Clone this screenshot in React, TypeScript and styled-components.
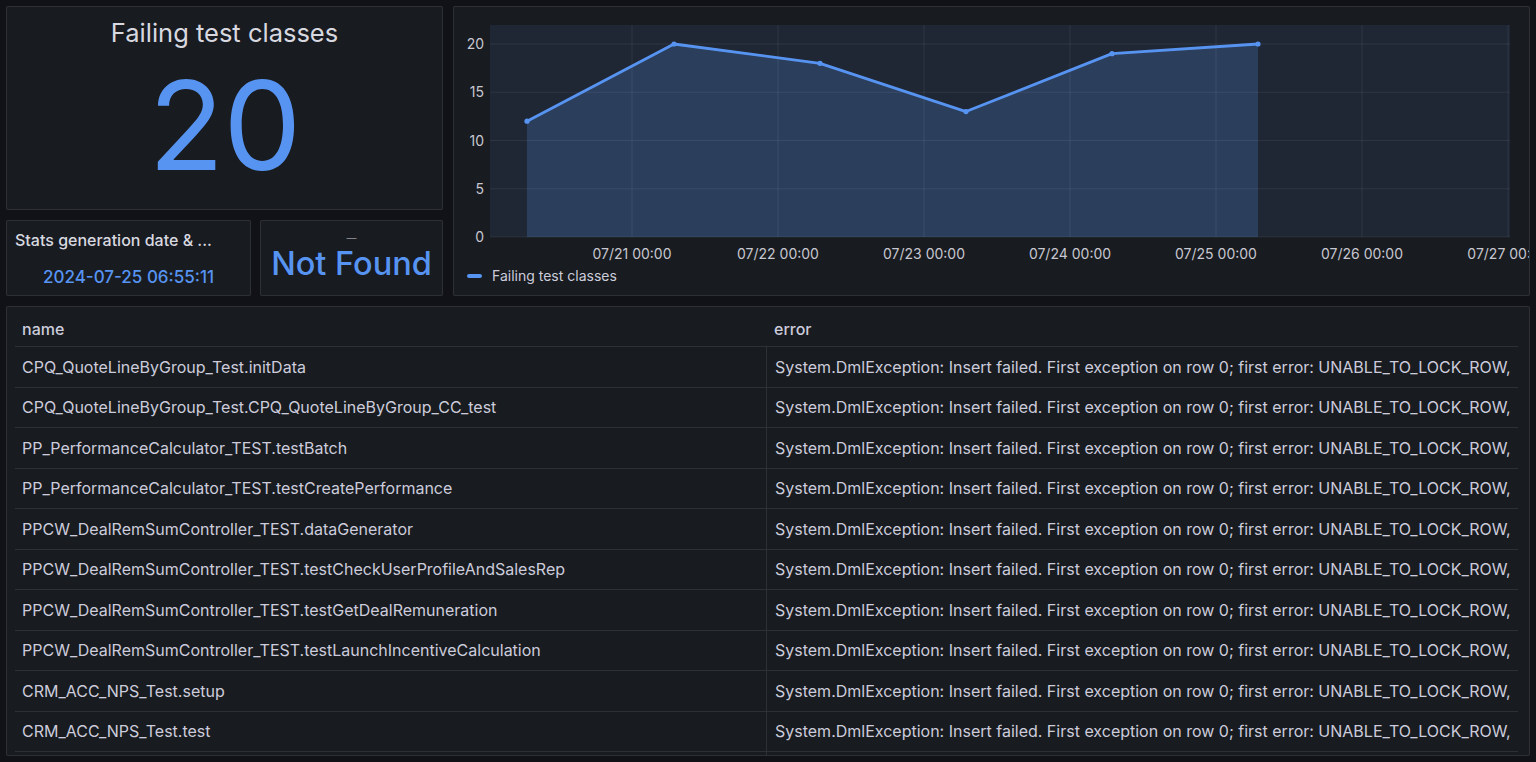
import React from 'react';
import styled, { createGlobalStyle } from 'styled-components';

const GlobalStyle = createGlobalStyle`
    html, body {
        margin: 0;
        padding: 0;
        background: #111217;
        overflow: hidden;
    }
    body {
        font-family: Inter, "Noto Sans", "Liberation Sans", sans-serif;
        color: #ccccdc;
    }
`

const Page = styled.div`
    display: flex;
    flex-direction: column;
    gap: 10px;
    padding: 6px;
    height: 762px;
    box-sizing: border-box;
`
const TopRow = styled.div`
    display: flex;
    gap: 10px;
    height: 290px;
`
const LeftCol = styled.div`
    display: flex;
    flex-direction: column;
    gap: 10px;
    width: 437px;
`
const StatRow = styled.div`
    display: flex;
    gap: 9px;
    height: 76px;
`
const Panel = styled.div<{ $grow?: boolean; $width?: number }>`
    background: #181b1f;
    border: 1px solid rgba(204, 204, 220, 0.12);
    border-radius: 2px;
    box-sizing: border-box;
    overflow: hidden;
    ${(p) => (p.$grow ? 'flex: 1;' : '')}
    ${(p) => (p.$width ? `width: ${p.$width}px;` : '')}
`
const BigStat = styled(Panel)`
    height: 204px;
    display: flex;
    flex-direction: column;
    align-items: center;
`
const BigTitle = styled.div`
    font-size: 25.5px;
    color: #d8d9e0;
    margin-top: 13px;
    line-height: 26px;
`
const BigValue = styled.div`
    font-size: 124px;
    color: #5794f2;
    line-height: 100px;
    margin-top: 29px;
    letter-spacing: -1px;
`
const DatePanel = styled(Panel)`
    display: flex;
    flex-direction: column;
    padding: 9px 8px 0;
`
const SmallTitle = styled.div`
    font-size: 16px;
    font-weight: 500;
    color: #d8d9e0;
    white-space: nowrap;
`
const DateValue = styled.div`
    font-size: 17px;
    font-weight: 500;
    color: #5794f2;
    margin-top: 17px;
    text-align: center;
`
const NotFoundPanel = styled(Panel)`
    display: flex;
    flex-direction: column;
    align-items: center;
`
const Dash = styled.div`
    font-size: 10px;
    color: #9a9aa6;
    margin-top: 12px;
    line-height: 10px;
`
const NotFound = styled.div`
    font-size: 32.5px;
    font-weight: 500;
    color: #5794f2;
    line-height: 40px;
    margin-top: 1px;
`
const ChartPanel = styled(Panel)`
    display: flex;
    flex-direction: column;
`
const Legend = styled.div`
    display: flex;
    align-items: center;
    gap: 10px;
    padding-left: 13px;
    margin-top: 2px;
    font-size: 14px;
    color: #ccccdc;
`
const LegendLine = styled.span`
    width: 15px;
    height: 4px;
    border-radius: 2px;
    background: #5794f2;
`
const TablePanel = styled(Panel)`
    flex: 1;
    padding: 4px 11px 0 8px;
`
const Table = styled.div`
    display: flex;
    flex-direction: column;
    font-size: 16px;
`
const Row = styled.div<{ $head?: boolean }>`
    display: grid;
    grid-template-columns: 751px 1fr;
    height: ${(p) => (p.$head ? '36px' : '40.5px')};
    box-sizing: border-box;
    border-bottom: 1px solid rgba(204, 204, 220, 0.12);
    font-weight: ${(p) => (p.$head ? 500 : 400)};
`
const Cell = styled.div<{ $divider?: boolean; $head?: boolean }>`
    display: flex;
    align-items: center;
    padding-left: ${(p) => (p.$divider || p.$head ? '8px' : '7px')};
    white-space: nowrap;
    overflow: hidden;
    color: #ccccdc;
    ${(p) => (p.$divider ? 'border-left: 1px solid rgba(204, 204, 220, 0.12);' : '')}
`
const EmptyRow = styled.div`
    display: grid;
    grid-template-columns: 751px 1fr;
    height: 20px;
`

const points: [number, number][] = [
    [73, 12], [220, 20], [366, 18], [512, 13], [658, 19], [804, 20],
]
const yOf = (v: number) => 230 - v * 9.65
const days = ['07/21', '07/22', '07/23', '07/24', '07/25', '07/26', '07/27']
const dayX = [178, 324, 470, 616, 762, 908, 1054]

const Chart: React.FC = () => {
    const line = points.map(([x, v]) => `${x},${yOf(v)}`).join(' ')
    const area = `${points[0][0]},230 ${line} ${points[points.length - 1][0]},230`
    return (
        <svg width="1075" height="258" style={{ display: 'block' }}>
            <rect x="36" y="18" width="1020" height="212" fill="#1f2634" />
            <polygon points={area} fill="#2b3f5d" />
            {[0, 5, 10, 15, 20].map((v) => (
                <g key={v}>
                    <line x1="36" x2="1056" y1={yOf(v)} y2={yOf(v)} stroke="rgba(204,204,220,0.09)" />
                    <text x="30" y={yOf(v) + 5} textAnchor="end" fontSize="14" fill="#c7c7d1" fontFamily="Inter, sans-serif">{v}</text>
                </g>
            ))}
            {dayX.map((x, i) => (
                <g key={x}>
                    <line x1={x} x2={x} y1="18" y2="230" stroke="rgba(204,204,220,0.09)" />
                    <text x={x} y="252" textAnchor="middle" fontSize="14" fill="#c7c7d1" fontFamily="Inter, sans-serif">{days[i]} 00:00</text>
                </g>
            ))}
            <polyline points={line} fill="none" stroke="#5794f2" strokeWidth="2.8" strokeLinejoin="round" />
            {points.map(([x, v]) => (
                <circle key={x} cx={x} cy={yOf(v)} r="2.6" fill="#5794f2" />
            ))}
        </svg>
    )
}

const rows = [
    'CPQ_QuoteLineByGroup_Test.initData',
    'CPQ_QuoteLineByGroup_Test.CPQ_QuoteLineByGroup_CC_test',
    'PP_PerformanceCalculator_TEST.testBatch',
    'PP_PerformanceCalculator_TEST.testCreatePerformance',
    'PPCW_DealRemSumController_TEST.dataGenerator',
    'PPCW_DealRemSumController_TEST.testCheckUserProfileAndSalesRep',
    'PPCW_DealRemSumController_TEST.testGetDealRemuneration',
    'PPCW_DealRemSumController_TEST.testLaunchIncentiveCalculation',
    'CRM_ACC_NPS_Test.setup',
    'CRM_ACC_NPS_Test.test',
]
const errorText = 'System.DmlException: Insert failed. First exception on row 0; first error: UNABLE_TO_LOCK_ROW,'

export default function App() {
    return (
        <Page>
            <GlobalStyle />
            <TopRow>
                <LeftCol>
                    <BigStat>
                        <BigTitle>Failing test classes</BigTitle>
                        <BigValue>20</BigValue>
                    </BigStat>
                    <StatRow>
                        <DatePanel $width={245}>
                            <SmallTitle>Stats generation date &amp; ...</SmallTitle>
                            <DateValue>2024-07-25 06:55:11</DateValue>
                        </DatePanel>
                        <NotFoundPanel $grow>
                            <Dash>—</Dash>
                            <NotFound>Not Found</NotFound>
                        </NotFoundPanel>
                    </StatRow>
                </LeftCol>
                <ChartPanel $grow>
                    <Chart />
                    <Legend>
                        <LegendLine />
                        Failing test classes
                    </Legend>
                </ChartPanel>
            </TopRow>
            <TablePanel>
                <Table>
                    <Row $head>
                        <Cell>name</Cell>
                        <Cell $head>error</Cell>
                    </Row>
                    {rows.map((name) => (
                        <Row key={name}>
                            <Cell>{name}</Cell>
                            <Cell $divider>{errorText}</Cell>
                        </Row>
                    ))}
                    <EmptyRow>
                        <Cell />
                        <Cell $divider />
                    </EmptyRow>
                </Table>
            </TablePanel>
        </Page>
    )
}
